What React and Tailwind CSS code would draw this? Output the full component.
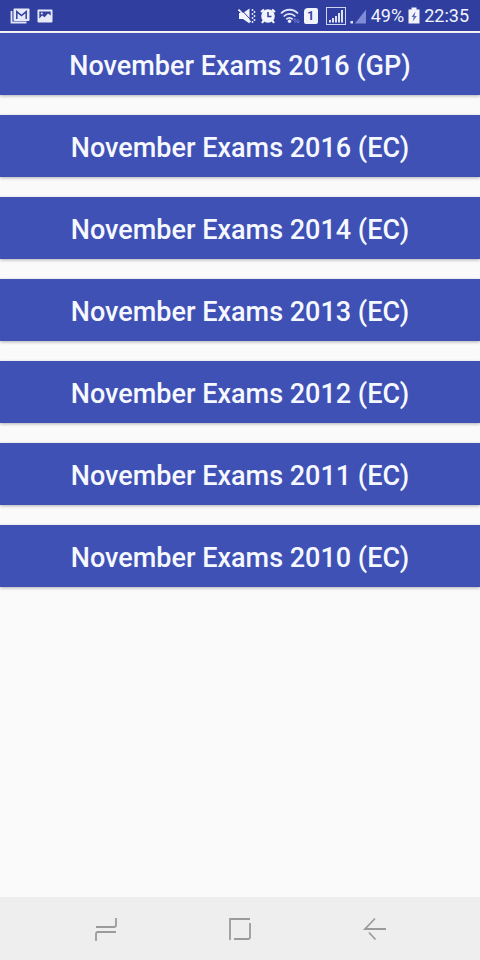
const EXAMS = [
  'November Exams 2016 (GP)',
  'November Exams 2016 (EC)',
  'November Exams 2014 (EC)',
  'November Exams 2013 (EC)',
  'November Exams 2012 (EC)',
  'November Exams 2011 (EC)',
  'November Exams 2010 (EC)',
];

function MailIcon() {
  return (
    <svg viewBox="0 0 20 16" className="w-5 h-4" fill="none">
      <path d="M1.5 3v11.5h15" stroke="#dfe3f8" strokeWidth="1.8" />
      <rect x="3.5" y="0.5" width="16" height="12.5" rx="1" fill="#e6e9fa" />
      <path d="M6.8 11V3.6l4.7 4 4.7-4V11" stroke="#34409c" strokeWidth="1.5" />
    </svg>
  );
}

function PictureIcon() {
  return (
    <svg viewBox="0 0 16 14" className="w-4 h-3.5" fill="none">
      <rect x="0.5" y="0.5" width="15" height="13" rx="1" fill="#e6e9fa" />
      <path d="M2.3 2.5h11.4v4L11 4.6 7.6 8.2 5.2 6.6 2.3 9.4z" fill="#34409c" />
      <circle cx="4.8" cy="4.4" r="1" fill="#e6e9fa" />
    </svg>
  );
}

function MuteIcon() {
  return (
    <svg viewBox="0 0 18 16" className="w-[18px] h-4" fill="none">
      <path d="M1 5h4l6.500-4.500v15L5 11H1z" fill="#f1f3fd" />
      <path d="M3 1.500l9.500 10" stroke="#303f9f" strokeWidth="1" />
      <path d="M0.5 1.500l12 12.500" stroke="#f1f3fd" strokeWidth="1.8" />
      <path d="M14.5 1v14" stroke="#dfe3f8" strokeWidth="1.5" strokeDasharray="2 2" />
      <path d="M16.5 3v10" stroke="#dfe3f8" strokeWidth="1.5" strokeDasharray="2 2" />
    </svg>
  );
}

function AlarmIcon() {
  return (
    <svg viewBox="0 0 16 16" className="w-4 h-4" fill="none">
      <path d="M1 4l3-2.500M15 4l-3-2.500M4 12l-2 3M12 12l2 3" stroke="#f1f3fd" strokeWidth="2.2" />
      <circle cx="8" cy="8" r="6.8" fill="#f1f3fd" />
      <path d="M8 4v4.500h3.500" stroke="#303f9f" strokeWidth="1.5" />
    </svg>
  );
}

function WifiIcon() {
  return (
    <svg viewBox="0 0 20 16" className="w-5 h-4" fill="none">
      <path d="M1 5.500c4.700-5 12.300-5 17 0M3.700 8.500c3.300-3.500 8.300-3.500 11.600 0M6.300 11.300c1.900-2 4.500-2 6.400 0" stroke="#dfe3f8" strokeWidth="1.8" />
      <circle cx="9.5" cy="13.3" r="1.7" fill="#f1f3fd" />
      <path d="M15 15v-4M13.500 12.500L15 10.700l1.500 1.800M18 11v4M16.500 13.300L18 15l1.500-1.700" stroke="#6f7bc8" strokeWidth="1" />
    </svg>
  );
}

function SimCard() {
  return (
    <span className="mr-1 flex h-4 w-[14px] items-center justify-center rounded-xs rounded-tl-sm bg-[#f1f3fd] text-xs font-bold leading-none text-[#303f9f]">
      1
    </span>
  );
}

function SignalBoxIcon() {
  return (
    <svg viewBox="0 0 20 18" className="w-5 h-[18px]" fill="none">
      <rect x="0.5" y="0.5" width="19" height="17" stroke="#cdd3f2" />
      <path d="M4 15.500V13M7 15.500V11M10 15.500V9M13 15.500V6M16 15.500V3" stroke="#dfe3f8" strokeWidth="2" />
    </svg>
  );
}

function SignalIcon() {
  return (
    <svg viewBox="0 0 17 16" className="w-[17px] h-4">
      <rect x="0.5" y="13" width="2.5" height="2.5" fill="#dfe3f8" />
      <path d="M5 15.500L16 1.500v14z" fill="#7f8bd6" />
    </svg>
  );
}

function BatteryIcon() {
  return (
    <svg viewBox="0 0 12 17" className="w-3 h-[17px]">
      <path d="M3.500 0.500h5v2h3v14h-11v-14h3z" fill="#f1f3fd" />
      <path d="M7.500 4.500L3.500 10h2.200l-1 4.500L8.800 9H6.500z" fill="#5c68b8" />
    </svg>
  );
}

function StatusBar() {
  return (
    <header className="flex h-[31px] items-center justify-between bg-[#303f9f] pl-[10px] pr-[11px] text-[#f1f3fd]">
      <div className="flex items-center gap-[7px]">
        <MailIcon />
        <PictureIcon />
      </div>
      <div className="flex items-center gap-1 text-lg leading-6">
        <MuteIcon />
        <AlarmIcon />
        <WifiIcon />
        <SimCard />
        <SignalBoxIcon />
        <SignalIcon />
        <span>49%</span>
        <BatteryIcon />
        <span>22:35</span>
      </div>
    </header>
  );
}

function NavBar() {
  return (
    <nav className="flex h-[63px] items-center justify-center gap-[110px] bg-[#eeeeee] text-[#9b9b9b]">
      <button type="button" aria-label="Recent apps">
        <svg viewBox="0 0 24 24" className="w-6 h-6" fill="none" stroke="currentColor" strokeWidth="1.8">
          <path d="M2 10h18q2 0 2-2V1M22 15H4q-2 0-2 2v7" />
        </svg>
      </button>
      <button type="button" aria-label="Home">
        <svg viewBox="0 0 24 24" className="w-6 h-6" fill="none" stroke="currentColor" strokeWidth="1.8">
          <path d="M2 23V2h20M22 6v14q0 2-2 2H6" />
        </svg>
      </button>
      <button type="button" aria-label="Back">
        <svg viewBox="0 0 24 24" className="w-6 h-6" fill="none" stroke="currentColor" strokeWidth="1.8">
          <path d="M13 1.500L3 12h21M7 15.500l6.500 7" />
        </svg>
      </button>
    </nav>
  );
}

export default function App() {
  return (
    <div className="flex min-h-screen flex-col bg-[#fafafa] font-['Roboto',sans-serif]">
      <StatusBar />
      <main className="flex flex-1 flex-col gap-5 pt-[2px]">
        {EXAMS.map(title => (
          <button
            key={title}
            type="button"
            className="h-[62px] w-full bg-[#3f51b5] pt-1 text-[27px] font-medium leading-8 text-[#f6f8ff] shadow-[0_1px_3px_rgba(0,0,0,0.3)]"
          >
            {title}
          </button>
        ))}
      </main>
      <NavBar />
    </div>
  );
}
